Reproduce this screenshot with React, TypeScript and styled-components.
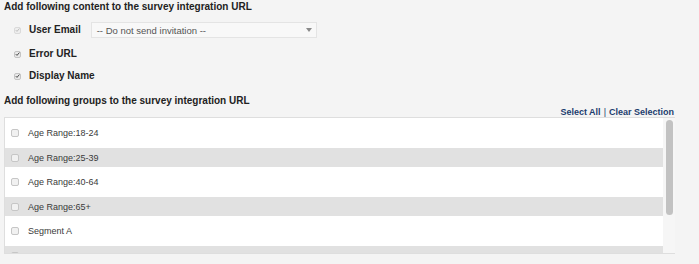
import styled, { createGlobalStyle } from "styled-components";

const GlobalStyle = createGlobalStyle`
  body {
    margin: 0;
    background: #f4f4f4;
    font-family: "Liberation Sans", Arial, sans-serif;
  }
`;

const Page = styled.div`
  padding: 1px 24px 0 4px;
  display: flex;
  flex-direction: column;
`;

const Title = styled.div<{ $gap?: number }>`
  font-size: 10px;
  font-weight: bold;
  color: #222;
  line-height: 12px;
  margin-top: ${(p) => p.$gap ?? 0}px;
`;

const Fields = styled.div`
  display: flex;
  flex-direction: column;
  margin-top: 9px;
  padding-left: 10px;
`;

const FieldRow = styled.div<{ $gap?: number }>`
  display: flex;
  align-items: center;
  height: 16px;
  margin-top: ${(p) => p.$gap ?? 0}px;
`;

const Check = styled.span<{ $disabled?: boolean }>`
  width: 7px;
  height: 7px;
  box-sizing: border-box;
  border: 1px solid ${(p) => (p.$disabled ? "#dadada" : "#c4c4c4")};
  border-radius: 2px;
  background: ${(p) => (p.$disabled ? "#eeeeee" : "#e9e9e9")};
  display: flex;
  align-items: center;
  justify-content: center;
  flex-shrink: 0;
  svg {
    display: block;
  }
`;

const Label = styled.span`
  font-size: 10px;
  font-weight: bold;
  color: #222;
  margin-left: 8px;
  margin-top: -2px;
`;

const Select = styled.div`
  margin-left: 10px;
  width: 226px;
  height: 16px;
  box-sizing: border-box;
  border: 1px solid #e4e4e4;
  background: #f8f8f8;
  display: flex;
  align-items: center;
  justify-content: space-between;
  padding: 0 4px 0 5px;
  font-size: 9.5px;
  color: #555;
`;

const Arrow = styled.span`
  width: 0;
  height: 0;
  border-left: 3px solid transparent;
  border-right: 3px solid transparent;
  border-top: 4px solid #8a8a8a;
`;

const Links = styled.div`
  display: flex;
  justify-content: flex-end;
  gap: 3px;
  font-size: 9px;
  line-height: 10px;
  color: #1c3d6e;
  padding-right: 1px;
`;

const Link = styled.span`
  font-weight: bold;
`;

const Box = styled.div`
  display: flex;
  height: 137px;
  box-sizing: border-box;
  border: 1px solid #dedede;
  border-right: none;
  background: #fff;
`;

const List = styled.div`
  flex: 1;
  overflow: hidden;
  display: flex;
  flex-direction: column;
  gap: 5.5px;
  padding-top: 5.5px;
`;

const Item = styled.div<{ $shade: boolean }>`
  flex-shrink: 0;
  height: 19px;
  display: flex;
  align-items: center;
  padding-left: 6px;
  background: ${(p) => (p.$shade ? "#e1e1e1" : "#fff")};
  font-size: 9px;
  color: #3a3a3a;
`;

const ItemCheck = styled.span`
  width: 8px;
  height: 8px;
  box-sizing: border-box;
  border: 1px solid #c6c6c6;
  border-radius: 2px;
  background: #f1f1f1;
  margin-right: 9px;
`;

const Track = styled.div`
  width: 12px;
  background: #f6f6f6;
  padding: 2px 0 0 3px;
  box-sizing: border-box;
`;

const Thumb = styled.div`
  width: 7px;
  height: 95px;
  border-radius: 4px;
  background: #c2c2c2;
`;

const Tick = ({ color }: { color: string }) => (
  <svg width="6" height="6" viewBox="0 0 10 10">
    <path d="M1.5 5.2 L4 7.8 L8.7 2.2" fill="none" stroke={color} strokeWidth="2" />
  </svg>
);

const groups = [
  "Age Range:18-24",
  "Age Range:25-39",
  "Age Range:40-64",
  "Age Range:65+",
  "Segment A",
  "Segment B",
];

export default function App() {
  return (
    <>
      <GlobalStyle />
      <Page>
        <Title>Add following content to the survey integration URL</Title>
        <Fields>
          <FieldRow>
            <Check $disabled>
              <Tick color="#bdbdbd" />
            </Check>
            <Label>User Email</Label>
            <Select>
              <span>-- Do not send invitation --</span>
              <Arrow />
            </Select>
          </FieldRow>
          <FieldRow $gap={8}>
            <Check>
              <Tick color="#4a4a4a" />
            </Check>
            <Label>Error URL</Label>
          </FieldRow>
          <FieldRow $gap={6}>
            <Check>
              <Tick color="#4a4a4a" />
            </Check>
            <Label>Display Name</Label>
          </FieldRow>
        </Fields>
        <Title $gap={11}>Add following groups to the survey integration URL</Title>
        <Links>
          <Link>Select All</Link>
          <span>|</span>
          <Link>Clear Selection</Link>
        </Links>
        <Box>
          <List>
            {groups.map((g, i) => (
              <Item key={g} $shade={i % 2 === 1}>
                <ItemCheck />
                {g}
              </Item>
            ))}
          </List>
          <Track>
            <Thumb />
          </Track>
        </Box>
      </Page>
    </>
  );
}
